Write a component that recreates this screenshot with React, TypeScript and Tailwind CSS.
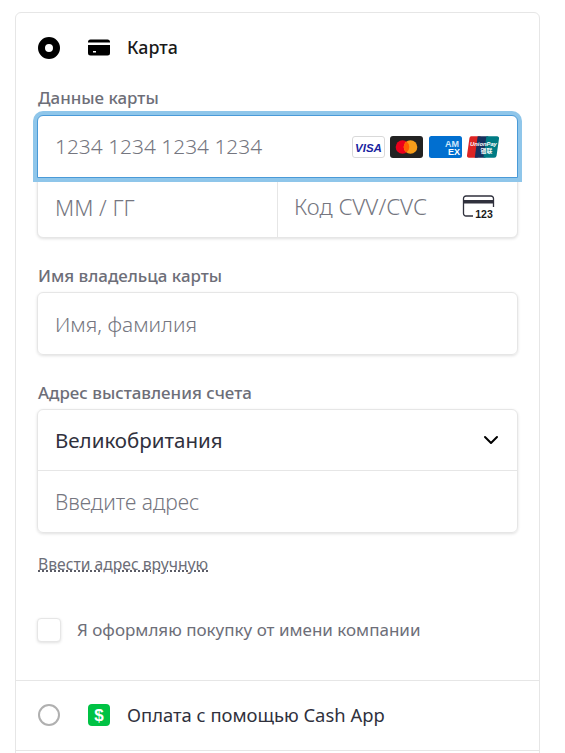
import React from 'react';

function CardLogos() {
    return (
        <div className="flex items-center gap-[5px]">
            <svg width="33" height="22" viewBox="0 0 33 22">
                <rect x="0.5" y="0.5" width="32" height="21" rx="2.5" fill="#fff" stroke="#d9d9d9" />
                <text x="16.5" y="15.5" textAnchor="middle" fontSize="11.5" fontWeight="800" fontStyle="italic" fill="#1a1f9f" fontFamily="Liberation Sans, sans-serif">VISA</text>
            </svg>
            <svg width="33" height="22" viewBox="0 0 33 22">
                <rect width="33" height="22" rx="3" fill="#222" />
                <circle cx="12.5" cy="11" r="6.8" fill="#eb001b" />
                <circle cx="20.5" cy="11" r="6.8" fill="#f79e1b" />
                <path d="M16.5 5.5a6.8 6.8 0 0 1 0 11a6.8 6.8 0 0 1 0-11z" fill="#ff5f00" />
            </svg>
            <svg width="33" height="22" viewBox="0 0 33 22" className="ml-px">
                <rect width="33" height="22" rx="2.5" fill="#016fd0" />
                <text x="23" y="10.5" textAnchor="middle" fontSize="9" fontWeight="700" fill="#cfe6fb" fontFamily="Liberation Sans, sans-serif">AM</text>
                <text x="25" y="19" textAnchor="middle" fontSize="9" fontWeight="700" fill="#fff" fontFamily="Liberation Sans, sans-serif">EX</text>
            </svg>
            <svg width="32" height="22" viewBox="0 0 33 22">
                <path d="M4 0h10l-3 22H2a2 2 0 0 1-2-2.500L2.500 2A2.500 2.500 0 0 1 4 0z" fill="#dd2423" />
                <path d="M11 0h11l-3 22H8z" fill="#16315e" />
                <path d="M20 0h11a2 2 0 0 1 2 2.500L30.500 20a2.500 2.500 0 0 1-2.500 2H17z" fill="#007b84" />
                <text x="17" y="9.500" textAnchor="middle" fontSize="6" fontWeight="700" fontStyle="italic" fill="#fff" fontFamily="Liberation Sans, sans-serif">UnionPay</text>
                <text x="20" y="17" textAnchor="middle" fontSize="6" fontWeight="700" fill="#fff" fontFamily="Noto Sans CJK SC, sans-serif">银联</text>
            </svg>
        </div>
    );
}

function CvcIcon() {
    return (
        <svg width="33" height="24" viewBox="0 0 33 24" fill="none">
            <path d="M11 21H4a2.500 2.500 0 0 1-2.500-2.500v-15A2.500 2.500 0 0 1 4 1h25a2.500 2.500 0 0 1 2.500 2.500V12" stroke="#30313d" strokeWidth="1.300" />
            <rect x="1.500" y="5" width="30" height="3.500" fill="#30313d" />
            <text x="22" y="22.500" textAnchor="middle" fontSize="10.500" fontWeight="700" fill="#1a1a1a" fontFamily="Liberation Sans, sans-serif">123</text>
        </svg>
    );
}

export default function App() {
    return (
        <div className="w-[565px] h-[753px] overflow-hidden bg-white pt-3 pl-[15px] font-['Noto_Sans','Open_Sans',sans-serif]">
            <div className="w-[525px] h-[760px] rounded-t-md border border-[#e6e6e6] bg-white">
                {/* Selected method: card */}
                <div className="px-[22px] pt-[23px]">
                    <div className="flex items-center h-[23px]">
                        <span className="w-[22px] h-[22px] rounded-full border-[7px] border-black bg-white" />
                        <svg width="22" height="17" viewBox="0 0 22 16" className="ml-[28px]">
                            <path d="M0 2.500A2.500 2.500 0 0 1 2.500 0h17A2.500 2.500 0 0 1 22 2.500V3H0zM0 5.500h22v8a2.500 2.500 0 0 1-2.500 2.500h-17A2.500 2.500 0 0 1 0 13.500zM5 11.500h3v1.500H5z" fill="#000" fillRule="evenodd" />
                        </svg>
                        <span className="ml-[17px] text-[17.800px] font-medium text-[#1a1a1a]">Карта</span>
                    </div>

                    <div className="mt-[29px] text-[16.900px] leading-5 font-medium text-[#6d6e78]">Данные карты</div>

                    <div className="mt-[7px] -ml-px w-[481px] rounded-md bg-white shadow-[0_1px_3px_rgba(0,0,0,0.12)] border border-[#e6e6e6]">
                        <div className="relative -m-px h-[63px] rounded-t-md border border-[#4a9ad8] shadow-[0_0_0_4px_#8fc6ea] bg-white flex items-center justify-between pl-[17px] pr-[18px] z-10">
                            <span className="text-[20.900px] font-light text-[#757680]">1234 1234 1234 1234</span>
                            <CardLogos />
                        </div>
                        <div className="flex h-[60px]">
                            <div className="w-[240px] border-r border-[#e6e6e6] flex items-center pl-[17px] text-[22px] font-light text-[#757680]">ММ / ГГ</div>
                            <div className="flex-1 flex items-center justify-between pl-4 pr-[22px] text-[22.400px] font-light text-[#757680]">
                                <span>Код CVV/CVC</span>
                                <CvcIcon />
                            </div>
                        </div>
                    </div>

                    <div className="mt-[28px] text-[16.900px] leading-5 font-medium text-[#6d6e78]">Имя владельца карты</div>
                    <div className="mt-[6px] -ml-px w-[481px] h-[63px] rounded-md border border-[#e6e6e6] shadow-[0_1px_3px_rgba(0,0,0,0.12)] flex items-center pl-[17px] pt-[2px] text-[20.900px] font-light text-[#757680]">Имя, фамилия</div>

                    <div className="mt-[28px] text-[16.900px] leading-5 font-medium text-[#6d6e78]">Адрес выставления счета</div>
                    <div className="mt-[6px] -ml-px w-[481px] rounded-md border border-[#e6e6e6] shadow-[0_1px_3px_rgba(0,0,0,0.12)]">
                        <div className="h-[61px] flex items-center justify-between pl-[17px] pr-[18px] border-b border-[#e6e6e6] text-[20.500px] text-[#30313d]">
                            <span>Великобритания</span>
                            <svg width="16" height="10" viewBox="0 0 16 10" fill="none">
                                <path d="M2 2l6 6 6-6" stroke="#000" strokeWidth="2" strokeLinecap="round" strokeLinejoin="round" />
                            </svg>
                        </div>
                        <div className="h-[61px] flex items-center pl-[17px] pt-[2px] text-[21px] font-light text-[#757680]">Введите адрес</div>
                    </div>

                    <div className="mt-[21px] text-[15.700px] leading-5 text-[#6d6e78] underline decoration-dotted decoration-[#30313d] w-fit">Ввести адрес вручную</div>

                    <div className="mt-[43px] flex items-center -ml-px">
                        <span className="w-6 h-6 rounded border border-[#e6e6e6] shadow-[0_1px_3px_rgba(0,0,0,0.12)] bg-white" />
                        <span className="ml-[16px] text-[17px] text-[#6d6e78]">Я оформляю покупку от имени компании</span>
                    </div>
                </div>

                <div className="mt-[37px] h-[71px] border-y border-[#e6e6e6] flex items-center pl-[22px]">
                    <span className="w-[22px] h-[22px] rounded-full border-2 border-[#b0b0b0] bg-white" />
                    <svg width="22" height="22" viewBox="0 0 22 22" className="ml-[28px]">
                        <rect width="22" height="22" rx="4" fill="#00c244" />
                        <text x="11" y="17" textAnchor="middle" fontSize="17" fontWeight="700" fill="#fff" fontFamily="Liberation Sans, sans-serif">$</text>
                    </svg>
                    <span className="ml-[17px] text-[18.400px] text-[#30313d]">Оплата с помощью Cash App</span>
                </div>
            </div>
        </div>
    );
}
